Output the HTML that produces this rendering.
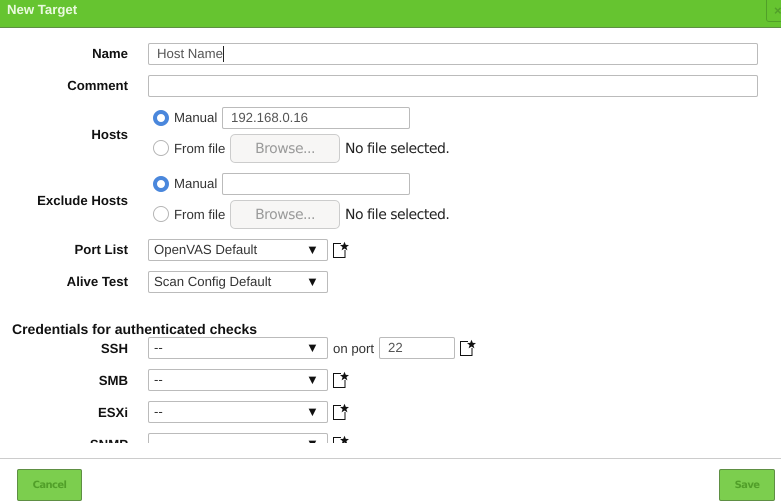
<!DOCTYPE html>
<html><head><meta charset="utf-8"><style>
html,body{margin:0;padding:0;background:#fff;width:781px;height:504px;overflow:hidden;font-family:"Liberation Sans",sans-serif;font-size:13.2px;color:#333;text-rendering:geometricPrecision}
div,span{position:absolute;box-sizing:border-box;white-space:nowrap}
.h{left:0;top:0;width:781px;height:28px;background:#66c430;border-bottom:1px solid #5e8f43}
.t{left:7px;top:1px;font-size:13.2px;font-weight:bold;color:#e9f9dd;line-height:17px}
.x{left:766px;top:-4px;width:30px;height:26px;border:1px solid #519f29;border-radius:3px;color:#519f29;font-size:13px;line-height:27px;padding-left:7px;font-weight:bold}
.l{width:128px;left:0;text-align:right;font-weight:bold;color:#111;line-height:16px;margin-top:1px}
.i{border:1px solid #bbb;border-radius:2px;background:#fff;height:22px;line-height:20px;padding-left:8px;color:#555}
.o{color:#333;line-height:16px;margin-top:1px}
.r{width:16px;height:16px;left:153px;border-radius:50%;border:1px solid #b5b5b5;background:#fff}
.r.c{border:4px solid #4a87dc}
.b{left:230px;width:110px;height:29px;border:1px solid #ccc;border-radius:5px;background:#f7f6f5;color:#9a9a9a;font-family:"DejaVu Sans",sans-serif;font-size:14px;line-height:29px;text-align:center;letter-spacing:-.5px}
.n{left:345px;font-family:"DejaVu Sans",sans-serif;font-size:14px;line-height:18px;color:#222;letter-spacing:-.5px;margin-top:1px}
.s{left:148px;width:180px;height:22px;border:1px solid #bbb;border-radius:2px;background:#fff;color:#333;line-height:20px;padding-left:5px}
.s i{position:absolute;left:157px;top:0;font-style:normal;font-size:13px;color:#111}
svg{position:absolute;left:333px;width:17px;height:18px}
.c1{left:0;top:28px;width:781px;height:415px;overflow:hidden}
.f{left:0;top:458px;width:781px;height:1px;background:#ccc}
.btn{top:469px;height:32px;background:#7cce4e;border:1px solid #5e8f43;border-radius:2px;color:#519f29;font-family:"DejaVu Sans",sans-serif;font-size:10px;font-weight:bold;line-height:32px;text-align:center;letter-spacing:-.6px}
</style></head><body>
<div class="h"><div class="t">New Target</div><div class="x">×</div></div>
<div class="c1"><div style="left:0;top:-28px;width:781px;height:504px">
<div class="l" style="top:45px">Name</div>
<div class="i" style="left:148px;top:43px;width:610px">Host Name<span style="left:74px;top:2px;width:1px;height:16px;background:#222"></span></div>
<div class="l" style="top:77px">Comment</div>
<div class="i" style="left:148px;top:75px;width:610px"></div>
<div class="l" style="top:126px">Hosts</div>
<div class="r c" style="top:110px"></div><div class="o" style="left:174px;top:109px">Manual</div>
<div class="i" style="left:222px;top:107px;width:188px">192.168.0.16</div>
<div class="r" style="top:140px"></div><div class="o" style="left:174px;top:140px">From file</div>
<div class="b" style="top:134px">Browse...</div><div class="n" style="top:139px">No file selected.</div>
<div class="l" style="top:192px">Exclude Hosts</div>
<div class="r c" style="top:176px"></div><div class="o" style="left:174px;top:175px">Manual</div>
<div class="i" style="left:222px;top:173px;width:188px"></div>
<div class="r" style="top:206px"></div><div class="o" style="left:174px;top:206px">From file</div>
<div class="b" style="top:200px">Browse...</div><div class="n" style="top:205px">No file selected.</div>
<div class="l" style="top:241px">Port List</div>
<div class="s" style="top:239px">OpenVAS Default<i>▼</i></div>
<svg style="top:241px" viewBox="0 0 17 18"><path d="M8 2.500H.5V16.500H12V9" fill="none" stroke="#111"/><polygon points="11.500,0.800 12.800,3.900 16,4 13.400,6.100 14.400,9.400 11.500,7.500 8.600,9.400 9.600,6.100 7,4 10.200,3.900" fill="#111"/></svg>
<div class="l" style="top:273px">Alive Test</div>
<div class="s" style="top:271px">Scan Config Default<i>▼</i></div>
<div style="left:12px;top:321px;font-size:14px;font-weight:bold;color:#111;line-height:16px">Credentials for authenticated checks</div>
<div class="l" style="top:340px">SSH</div>
<div class="s" style="top:337px">--<i>▼</i></div>
<div class="o" style="left:333px;top:340px">on port</div>
<div class="i" style="left:379px;top:337px;width:76px">22</div>
<svg style="left:460px;top:339px" viewBox="0 0 17 18"><path d="M8 2.500H.5V16.500H12V9" fill="none" stroke="#111"/><polygon points="11.500,0.800 12.800,3.900 16,4 13.400,6.100 14.400,9.400 11.500,7.500 8.600,9.400 9.600,6.100 7,4 10.200,3.900" fill="#111"/></svg>
<div class="l" style="top:372px">SMB</div>
<div class="s" style="top:369px">--<i>▼</i></div>
<svg style="top:371px" viewBox="0 0 17 18"><path d="M8 2.500H.5V16.500H12V9" fill="none" stroke="#111"/><polygon points="11.500,0.800 12.800,3.900 16,4 13.400,6.100 14.400,9.400 11.500,7.500 8.600,9.400 9.600,6.100 7,4 10.200,3.900" fill="#111"/></svg>
<div class="l" style="top:404px">ESXi</div>
<div class="s" style="top:401px">--<i>▼</i></div>
<svg style="top:403px" viewBox="0 0 17 18"><path d="M8 2.500H.5V16.500H12V9" fill="none" stroke="#111"/><polygon points="11.500,0.800 12.800,3.900 16,4 13.400,6.100 14.400,9.400 11.500,7.500 8.600,9.400 9.600,6.100 7,4 10.200,3.900" fill="#111"/></svg>
<div class="l" style="top:436px">SNMP</div>
<div class="s" style="top:433px">--<i>▼</i></div>
<svg style="top:435px" viewBox="0 0 17 18"><path d="M8 2.500H.5V16.500H12V9" fill="none" stroke="#111"/><polygon points="11.500,0.800 12.800,3.900 16,4 13.400,6.100 14.400,9.400 11.500,7.500 8.600,9.400 9.600,6.100 7,4 10.200,3.900" fill="#111"/></svg>
</div></div>
<div class="f"></div>
<div class="btn" style="left:17px;width:65px">Cancel</div>
<div class="btn" style="left:719px;width:56px">Save</div>
</body></html>
